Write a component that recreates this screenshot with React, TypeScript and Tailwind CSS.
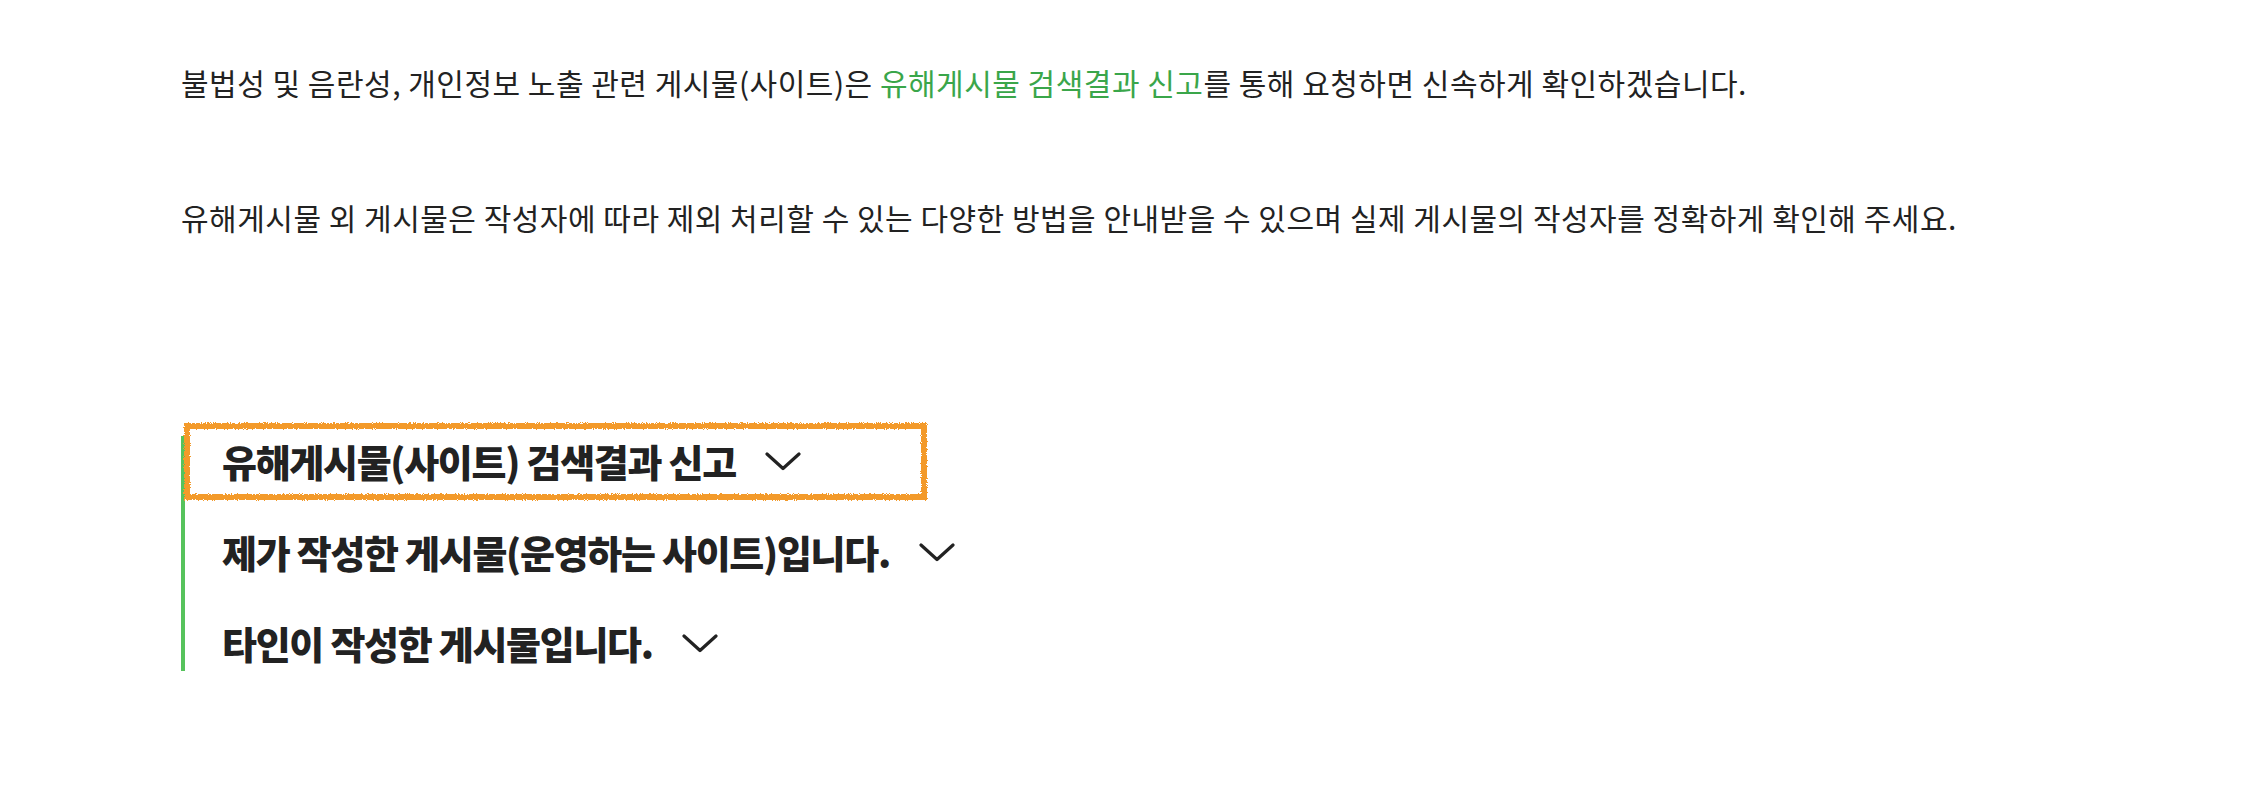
import React from "react";

const items = [
  "유해게시물(사이트) 검색결과 신고",
  "제가 작성한 게시물(운영하는 사이트)입니다.",
  "타인이 작성한 게시물입니다.",
];

const Chevron = () => (
  <svg width="36" height="19" viewBox="0 0 36 19" fill="none" className="shrink-0">
    <polyline
      points="2,2 18,16.5 34,2"
      stroke="#222222"
      strokeWidth="3.2"
      strokeLinecap="round"
      strokeLinejoin="round"
    />
  </svg>
);

// hand-drawn highlight around the first item
const CrayonBox = () => (
  <svg
    className="absolute -left-[41px] -top-[16px] pointer-events-none"
    width="752"
    height="84"
    viewBox="0 0 752 84"
  >
    <defs>
      <filter id="crayon" x="-5%" y="-20%" width="110%" height="140%">
        <feTurbulence type="fractalNoise" baseFrequency="1.1" numOctaves="2" seed="5" result="noise" />
        <feDisplacementMap in="SourceGraphic" in2="noise" scale="4" xChannelSelector="R" yChannelSelector="G" />
      </filter>
    </defs>
    <rect
      x="6"
      y="6"
      width="737"
      height="71"
      fill="none"
      stroke="#f39a2c"
      strokeWidth="6"
      filter="url(#crayon)"
    />
  </svg>
);

export default function App() {
  return (
    <div className="min-h-screen bg-white pl-[181px] pt-[64px] text-[#222222] [font-family:'Noto_Sans_CJK_KR','Noto_Sans',sans-serif]">
      <p className="text-[30px] leading-[36px] tracking-[0.5px]">
        불법성 및 음란성, 개인정보 노출 관련 게시물(사이트)은{" "}
        <a className="text-[#3aa64a]">유해게시물 검색결과 신고</a>를 통해 요청하면 신속하게 확인하겠습니다.
      </p>
      <p className="mt-[99px] text-[30px] leading-[36px] tracking-[0.5px]">
        유해게시물 외 게시물은 작성자에 따라 제외 처리할 수 있는 다양한 방법을 안내받을 수 있으며 실제 게시물의 작성자를 정확하게 확인해 주세요.
      </p>

      <ul className="mt-[201px] flex w-fit flex-col gap-[41px] border-l-4 border-[#56c35c] pb-[3px] pl-[37px]">
        {items.map((t, i) => (
          <li key={t} className="relative flex h-[50px] items-center">
            {i === 0 && <CrayonBox />}
            <span className="text-[38px] font-black leading-none tracking-[-1.3px]">{t}</span>
            <span className="ml-[29px] flex items-center">
              <Chevron />
            </span>
          </li>
        ))}
      </ul>
    </div>
  );
}
